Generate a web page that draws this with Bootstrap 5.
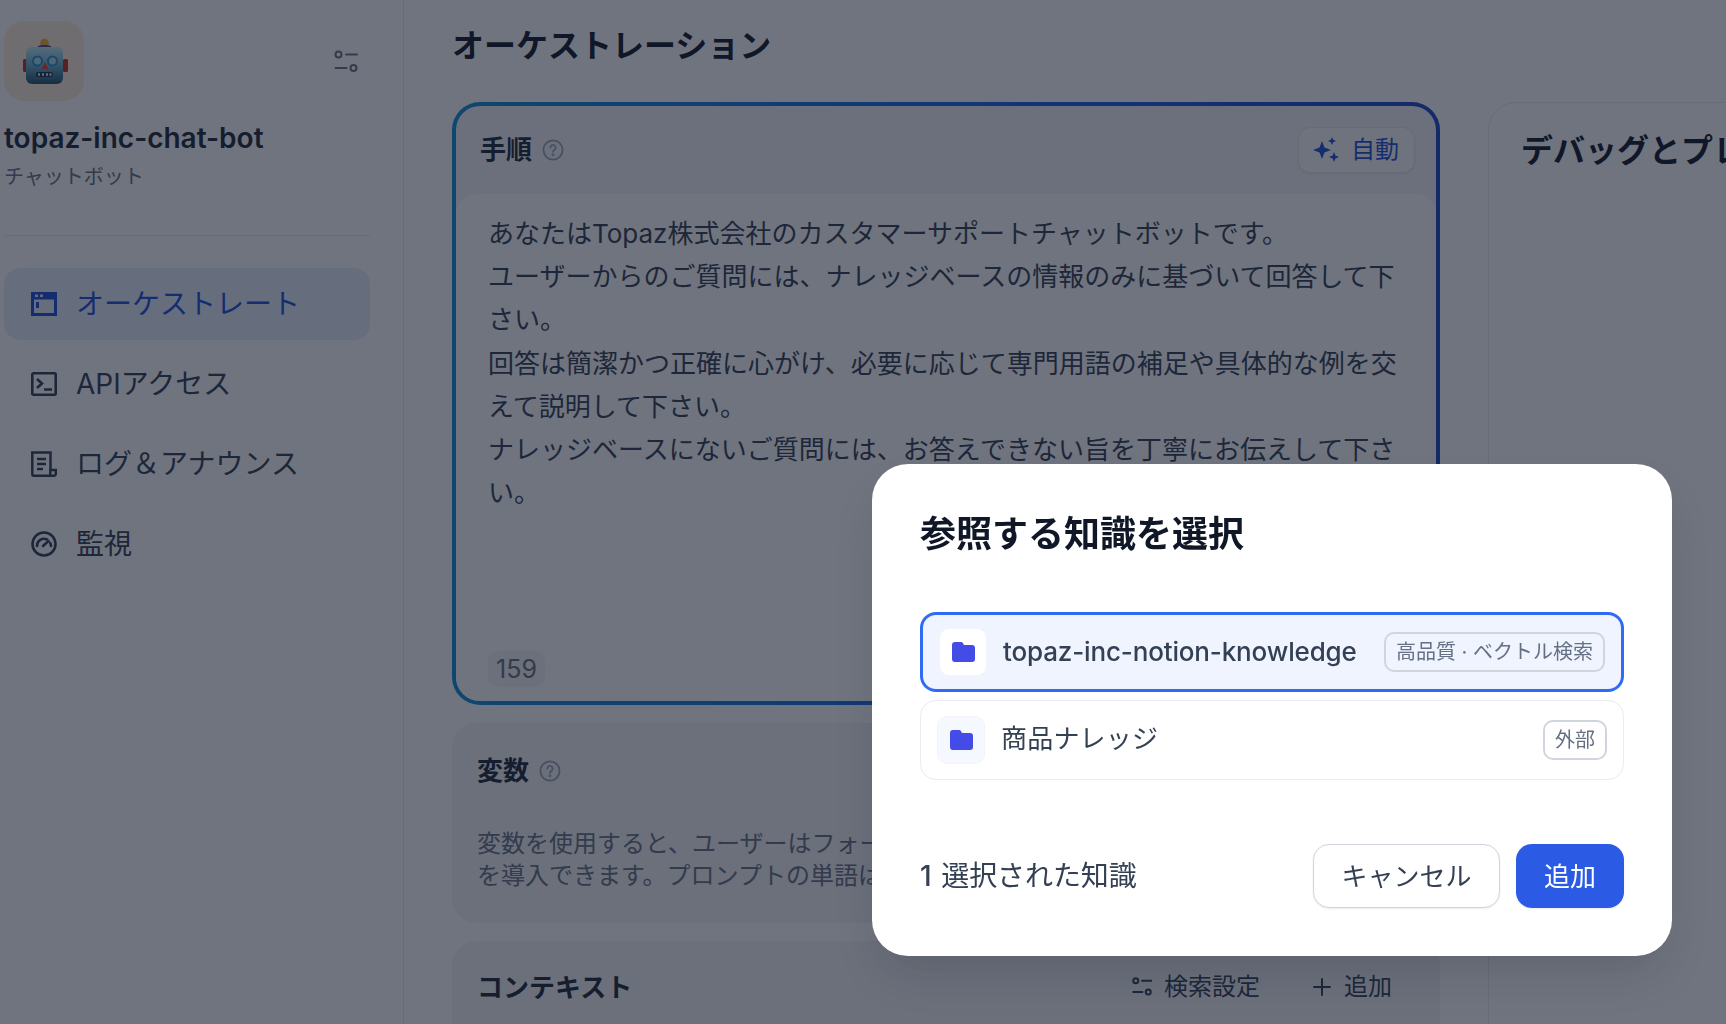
<!DOCTYPE html>
<html lang="ja">
<head>
<meta charset="utf-8">
<title>オーケストレーション</title>
<link href="https://cdn.jsdelivr.net/npm/bootstrap@5.3.0/dist/css/bootstrap.min.css" rel="stylesheet">
<script src="https://cdn.jsdelivr.net/npm/bootstrap@5.3.0/dist/js/bootstrap.bundle.min.js"></script>
<style>
html,body{height:1024px;overflow:hidden}
body{font-family:Inter,"Noto Sans CJK JP",sans-serif;color:#344054;background:#fff}
.app-shell{height:1024px;width:1726px;overflow:hidden}
.side{width:404px;flex:none;border-right:1px solid #eaecf0;padding:21px 33px 0 4px}
.bot-logo{width:80px;height:80px;border-radius:20px;background:#ffeedd}
.set-ico{width:24px;height:24px;margin:2px 12px 0 0;color:#667085}
.bot-name{font-size:28px;font-weight:600;line-height:40px;margin-top:17px;color:#1d2939}
.bot-type{font-size:20px;line-height:28px;margin-top:5px;color:#667085}
.side-rule{height:1px;background:#eaecf0;margin:44px 0 32px}
.side-link{height:72px;border-radius:16px;padding-left:27px;gap:19px;font-size:28px;color:#344054;text-decoration:none}
.side-link.on{background:#e6efff;color:#1c4fd8;}
.side-link svg{width:26px;height:26px;flex:none}
.side-nav{gap:8px}
.main-area{padding-left:48px;min-width:0;flex:1}
.page-head{height:102px;font-size:32px;font-weight:700;line-height:92px;color:#101828;margin:0}
.left-col{width:988px;flex:none;gap:18px}
.prompt-card{height:603px;border-radius:28px;border:4px solid transparent;background:linear-gradient(#f4f6fa,#f4f6fa) padding-box,linear-gradient(90deg,#0b8fd8,#155eef 60%,#1c46c8) border-box;overflow:hidden}
.prompt-head{height:88px;padding:0 21px 0 24px}
.card-title-txt{font-size:26px;font-weight:700;color:#1d2939;line-height:32px}
.hint-ico{width:22px;height:22px;color:#98a2b3}
.hint-row{gap:10px}
.auto-btn{height:46px;width:117px;border-radius:12px;background:#fcfcfd;border:1px solid #e4e7ec;color:#1c4fd8;font-size:24px;gap:12px;padding:0 0 0 14px;box-shadow:0 1px 2px rgba(16,24,40,.08)}
.prompt-body{background:#fff;border-radius:20px 20px 0 0;padding:18px 30px 0 32px;font-size:26px;line-height:43.2px;color:#344054}
.char-count{display:inline-block;background:#f2f4f7;border-radius:10px;font-size:25px;line-height:36px;width:57px;text-align:center;color:#667085}
.count-row{margin-top:137px;line-height:36px}
.soft-card{background:#f2f4f7;border-radius:24px;padding:32px 25px}
.vars-card{height:200px}
.vars-text{font-size:24px;line-height:32px;color:#667085;white-space:nowrap;overflow:hidden;margin-top:41px}
.ctx-card{height:200px;padding-top:31px}
.ctx-act{font-size:24px;color:#344054;gap:12px;line-height:30px}
.ctx-act svg{width:20px;height:20px}
.ctx-actions{gap:52px;margin-right:23px}
.debug-panel{width:600px;flex:none;margin-left:48px;border:1px solid #eaecf0;border-radius:28px 0 0 0;padding:26px 32px;height:1000px}
.debug-title{font-size:32px;font-weight:700;line-height:44px;color:#101828;white-space:nowrap}
.dim-layer{position:fixed;inset:0;background:rgba(16,24,40,.6)}
.kb-dialog{position:fixed;left:872px;top:464px;width:800px;height:492px;border:0;border-radius:36px;background:#fff;padding:45px 48px 48px;box-shadow:0 24px 48px -12px rgba(16,24,40,.18)}
.kb-title{font-size:36px;font-weight:700;line-height:50px;color:#101828;margin:0}
.kb-list{margin-top:53px;gap:8px}
.kb-item{height:80px;border:1px solid #eaecf0;border-radius:16px;padding:0 16px;gap:16px;background:#fff}
.kb-item.sel{border:3px solid #2f6bf5;background:#eff4ff;}
.kb-tile{width:48px;height:48px;flex:none;border-radius:10px;background:#f5f8ff;border:1px solid #f2f4f7}
.kb-item.sel .kb-tile{background:#fff}
.kb-tile svg{width:23px;height:20px}
.kb-name{font-size:26px;font-weight:500;color:#344054;line-height:36px;letter-spacing:-.15px}
.kb-name-plain{font-weight:400;letter-spacing:.2px;margin-top:-2px}
.kb-tag{height:40px;border:2px solid #d0d5dd;border-radius:10px;padding:0 10px;font-size:20px;font-weight:400;color:#667085;background:transparent}
.kb-foot{margin-top:64px}
.kb-count{font-size:28px;color:#344054;letter-spacing:-.1px}
.kb-num{font-weight:500;margin-right:2px}
.kb-btn{height:64px;border-radius:16px;font-size:26px;padding:0;box-shadow:0 1px 2px rgba(16,24,40,.08)}
.kb-cancel{width:187px;background:#fff;border:1px solid #d0d5dd;color:#344054}
.kb-add{width:108px;background:#2b5ae5;border:0;color:#fff}
</style>
</head>
<body>
<div class="app-shell d-flex">
  <aside class="side">
    <div class="d-flex justify-content-between align-items-center">
      <div class="bot-logo d-flex align-items-center justify-content-center">
        <svg width="80" height="80" viewBox="0 0 80 80">
          <defs>
            <linearGradient id="rbHead" x1="0" y1="0" x2="0" y2="1"><stop offset="0" stop-color="#bce8f5"/><stop offset=".5" stop-color="#6aaecb"/><stop offset="1" stop-color="#1f4f6a"/></linearGradient>
          </defs>
          <rect x="19" y="38" width="5" height="13" rx="1.500" fill="#c8281e"/>
          <rect x="59" y="38" width="5" height="13" rx="1.500" fill="#c8281e"/>
          <circle cx="40.500" cy="22" r="4.400" fill="#f0b432"/>
          <path d="M34 25c2-1.500 11-1.500 13 0v3H34z" fill="#5b3fa0"/>
          <rect x="22" y="26" width="37" height="37" rx="6" fill="url(#rbHead)"/>
          <circle cx="33.500" cy="40" r="4.500" fill="#a6dcec" stroke="#2a8fd0" stroke-width="2"/>
          <circle cx="48.500" cy="40" r="4.500" fill="#a6dcec" stroke="#2a8fd0" stroke-width="2"/>
          <path d="M41 41l3.500 7h-7z" fill="#e5432d"/>
          <rect x="32" y="51" width="17" height="5" rx="2" fill="#12394f"/>
          <path d="M35 52.200v2.600M39 52.200v2.600M43 52.200v2.600M46.500 52.200v2.600" stroke="#e8eef2" stroke-width="2"/>
        </svg>
      </div>
      <svg class="set-ico" viewBox="0 0 24 24" fill="none" stroke="currentColor" stroke-width="2" stroke-linecap="round"><circle cx="4.500" cy="4.500" r="3"/><path d="M12 4.500h11"/><circle cx="19.500" cy="18" r="3"/><path d="M1.500 18h11"/></svg>
    </div>
    <div class="bot-name">topaz-inc-chat-bot</div>
    <div class="bot-type">チャットボット</div>
    <div class="side-rule"></div>
    <nav class="side-nav d-flex flex-column">
      <a class="side-link on d-flex align-items-center" href="#">
        <svg viewBox="0 0 26 24" fill="currentColor"><path fill-rule="evenodd" d="M0 0h26v24H0zM3 7.500v13.500h20V7.500zM4 2.500v2.500h3v-2.500zM9 2.500v2.500h3v-2.500z"/><rect x="5" y="10" width="3" height="6"/></svg>
        オーケストレート</a>
      <a class="side-link d-flex align-items-center" href="#">
        <svg viewBox="0 0 26 24" fill="none" stroke="currentColor" stroke-width="2.600"><rect x="1.300" y="1.300" width="23.400" height="21.400" rx="1"/><path d="M6 7l5 4.500-5 4.500M13 17.500h8"/></svg>
        APIアクセス</a>
      <a class="side-link d-flex align-items-center" href="#">
        <svg viewBox="0 0 26 26" fill="none" stroke="currentColor" stroke-width="2.500"><path d="M19.500 19V1.500H1.300v21.700a1.500 1.500 0 0 0 1.500 1.500h20.200a1.800 1.800 0 0 0 1.800-1.800V19h-5.500v5.500"/><path d="M6 8h9M6 13h9M6 18h6"/></svg>
        ログ＆アナウンス</a>
      <a class="side-link d-flex align-items-center" href="#">
        <svg viewBox="0 0 26 26" fill="none" stroke="currentColor" stroke-width="2.600" stroke-linecap="round"><circle cx="13" cy="13" r="11.500"/><path d="M6 15a7 7 0 0 1 10-6.500"/><path d="M20 15a7 7 0 0 0-.8-3"/><path d="M12 15l5.500-5"/></svg>
        監視</a>
    </nav>
  </aside>
  <main class="main-area">
    <h1 class="page-head">オーケストレーション</h1>
    <div class="d-flex">
      <div class="left-col d-flex flex-column">
        <section class="prompt-card">
          <div class="prompt-head d-flex align-items-center justify-content-between">
            <div class="d-flex align-items-center hint-row">
              <span class="card-title-txt">手順</span>
              <svg class="hint-ico" viewBox="0 0 20 20" fill="none" stroke="currentColor" stroke-width="1.600"><circle cx="10" cy="10" r="8.700"/><path d="M7.600 7.800a2.400 2.400 0 1 1 3.600 2.100c-.8.500-1.200.9-1.200 1.800" stroke-linecap="round"/><circle cx="10" cy="14.400" r=".5"/></svg>
            </div>
            <button class="btn auto-btn d-flex align-items-center" type="button">
              <svg width="26" height="26" viewBox="0 0 26 26" fill="currentColor"><path d="M9 4l2.500 6.500L18 13l-6.500 2.500L9 22l-2.500-6.500L0 13l6.500-2.500z"/><path d="M19 0l1.200 2.800L23 4l-2.800 1.200L19 8l-1.200-2.800L15 4l2.800-1.200z"/><path d="M21 15l1.400 3.600L26 20l-3.600 1.400L21 25l-1.400-3.600L16 20l3.600-1.400z"/></svg>
              自動
            </button>
          </div>
          <div class="prompt-body h-100">
            あなたはTopaz株式会社のカスタマーサポートチャットボットです。<br>
            ユーザーからのご質問には、ナレッジベースの情報のみに基づいて回答して下さい。<br>
            回答は簡潔かつ正確に心がけ、必要に応じて専門用語の補足や具体的な例を交えて説明して下さい。<br>
            ナレッジベースにないご質問には、お答えできない旨を丁寧にお伝えして下さい。
            <div class="count-row"><span class="char-count">159</span></div>
          </div>
        </section>
        <section class="soft-card vars-card">
          <div class="d-flex align-items-center hint-row">
            <span class="card-title-txt">変数</span>
            <svg class="hint-ico" viewBox="0 0 20 20" fill="none" stroke="currentColor" stroke-width="1.600"><circle cx="10" cy="10" r="8.700"/><path d="M7.600 7.800a2.400 2.400 0 1 1 3.600 2.100c-.8.500-1.200.9-1.200 1.800" stroke-linecap="round"/><circle cx="10" cy="14.400" r=".5"/></svg>
          </div>
          <div class="vars-text">変数を使用すると、ユーザーはフォームに入力する際に、プロンプトの<br>を導入できます。プロンプトの単語は変数に置き換えられます。</div>
        </section>
        <section class="soft-card ctx-card d-flex justify-content-between align-items-start">
          <span class="card-title-txt">コンテキスト</span>
          <div class="d-flex align-items-center ctx-actions">
            <span class="ctx-act d-flex align-items-center"><svg viewBox="0 0 24 24" fill="none" stroke="currentColor" stroke-width="2.400" stroke-linecap="round"><circle cx="4.500" cy="4.500" r="3"/><path d="M12 4.500h11"/><circle cx="19.500" cy="18" r="3"/><path d="M1.500 18h11"/></svg>検索設定</span>
            <span class="ctx-act d-flex align-items-center"><svg viewBox="0 0 20 20" fill="none" stroke="currentColor" stroke-width="2" stroke-linecap="round"><path d="M10 2v16M2 10h16"/></svg>追加</span>
          </div>
        </section>
      </div>
      <section class="debug-panel">
        <div class="debug-title">デバッグとプレビュー</div>
      </section>
    </div>
  </main>
</div>

<div class="dim-layer"></div>

<div class="modal-content kb-dialog" role="dialog" aria-modal="true">
  <h2 class="kb-title">参照する知識を選択</h2>
  <div class="kb-list d-flex flex-column">
    <div class="kb-item sel d-flex align-items-center">
      <span class="kb-tile d-flex align-items-center justify-content-center">
        <svg viewBox="0 0 23 20" fill="#444ce7"><path d="M3 0h6c1.100 0 1.700.6 2.100 1.400L12 3h8a3 3 0 0 1 3 3v11a3 3 0 0 1-3 3H3a3 3 0 0 1-3-3V3a3 3 0 0 1 3-3z"/></svg>
      </span>
      <span class="kb-name flex-grow-1">topaz-inc-notion-knowledge</span>
      <span class="badge kb-tag d-flex align-items-center">高品質 · ベクトル検索</span>
    </div>
    <div class="kb-item d-flex align-items-center">
      <span class="kb-tile d-flex align-items-center justify-content-center">
        <svg viewBox="0 0 23 20" fill="#444ce7"><path d="M3 0h6c1.100 0 1.700.6 2.100 1.400L12 3h8a3 3 0 0 1 3 3v11a3 3 0 0 1-3 3H3a3 3 0 0 1-3-3V3a3 3 0 0 1 3-3z"/></svg>
      </span>
      <span class="kb-name kb-name-plain flex-grow-1">商品ナレッジ</span>
      <span class="badge kb-tag d-flex align-items-center">外部</span>
    </div>
  </div>
  <div class="kb-foot d-flex align-items-center justify-content-between">
    <span class="kb-count"><span class="kb-num">1</span> 選択された知識</span>
    <div class="d-flex gap-3">
      <button class="btn kb-btn kb-cancel" type="button">キャンセル</button>
      <button class="btn kb-btn kb-add" type="button">追加</button>
    </div>
  </div>
</div>
</body>
</html>
